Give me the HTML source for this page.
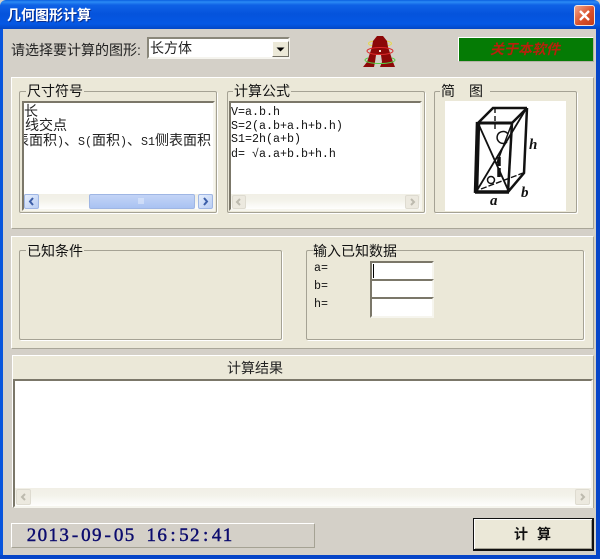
<!DOCTYPE html>
<html><head><meta charset="utf-8"><style>
html,body{margin:0;padding:0;width:600px;height:559px;overflow:hidden;background:#d4d0c8}
*{box-sizing:border-box}
div,span{position:absolute}
body{font-family:"Liberation Sans","Noto Sans CJK SC",sans-serif;color:#111}
.t{white-space:nowrap;font-size:14px;line-height:16px}
.m{white-space:nowrap;font-family:"Liberation Mono","Noto Sans CJK SC",monospace;font-size:11.67px;line-height:14px;color:#111}
b.l{font-weight:400;font-family:"Liberation Mono",monospace;font-size:11.67px}
.panel{background:#ebe8d8;border:1px solid;border-color:#fff #a9a698 #a9a698 #fff}
.grp{border:1px solid #a5a294;box-shadow:1px 1px 0 #fff;border-radius:2px}
.lab{background:#ebe8d8;padding:0 1px}
.box{background:#fff;border:2px solid;border-color:#7b7769 #f6f5ee #f6f5ee #7b7769;overflow:hidden}
.track{background:linear-gradient(#f1efe6,#f3f2ea 40%,#fefefd)}
.btnd{background:#ece9df;border:1px solid #dedbd0;border-radius:2px;color:#bdbaae}
.btnb{background:linear-gradient(135deg,#e6eefc,#b9cdf3);border:1px solid #9fb6e4;border-radius:2px}
.inp{background:#fff;border:2px solid;border-color:#7b7769 #f6f5ee #f6f5ee #7b7769;left:370px;width:64px}
.d{white-space:nowrap;font-family:"Liberation Serif",serif;font-size:19px;line-height:20px;color:#0c0c6e;-webkit-text-stroke:.45px #0c0c6e}
.d i{display:inline-block;width:10.9px;text-align:center;font-style:normal}
</style></head><body>
<!-- title bar -->
<div style="left:0;top:0;width:600px;height:29px;background:linear-gradient(#0a5fe0 0,#2b8bf5 2px,#0f62e6 5px,#0553dc 14px,#0558e4 24px,#0347c6 29px);border-radius:6px 6px 0 0"></div>
<div class="t" style="left:7px;top:7px;font-weight:700;color:#fff;font-size:14px;letter-spacing:0;text-shadow:1px 1px 0 #0a2f8f">几何图形计算</div>
<div style="left:574px;top:5px;width:21px;height:21px;background:linear-gradient(135deg,#f0a58c,#d9512c 55%,#c23c18);border:1px solid #f4e4dc;border-radius:3px"></div>
<svg style="position:absolute;left:574px;top:5px" width="21" height="21"><path d="M6 6L15 15M15 6L6 15" stroke="#fff" stroke-width="2.400"/></svg>
<!-- window borders -->
<div style="left:0;top:29px;width:3px;height:530px;background:#0855dd"></div>
<div style="left:596px;top:29px;width:4px;height:530px;background:#0645c8"></div>
<div style="left:0;top:555px;width:600px;height:4px;background:#0645c8"></div>

<!-- top row -->
<div class="t" style="left:11px;top:42px;color:#222">请选择要计算的图形:</div>
<div style="left:147px;top:37px;width:143px;height:22px;background:#fff;border:2px solid;border-color:#8a877a #f5f4ee #f5f4ee #8a877a"></div>
<div class="t" style="left:150px;top:40px;color:#222">长方体</div>
<div style="left:272px;top:41px;width:17px;height:16px;background:#ece9d8;border:1px solid;border-color:#fff #716f64 #716f64 #fff"></div>
<svg style="position:absolute;left:272px;top:41px" width="17" height="16"><path d="M4.500 6.500H12.500L8.500 10.500Z" fill="#000"/></svg>
<svg style="position:absolute;left:360px;top:33px" width="40" height="38">
<ellipse cx="20" cy="10.500" rx="11.500" ry="3" fill="none" stroke="#e8d84a" stroke-width="1"/>
<path d="M17 3H23L27 8L28 14L33 29L35 34H20L22 29L21 22H16L15 29L14 34H3L7 29L12 14L13 8Z" fill="#8c0808"/>
<ellipse cx="20" cy="18" rx="13" ry="3.500" fill="none" stroke="#dd2a2a" stroke-width="1"/>
<path d="M5 27A15 3.500 0 0 0 35 27M5 27A15 3.500 0 0 1 8 25M35 27A15 3.500 0 0 0 32 25" fill="none" stroke="#55cc44" stroke-width="1"/>
<rect x="19" y="17" width="2" height="2" fill="#f0e0d0"/>
</svg>
<div style="left:458px;top:37px;width:136px;height:25px;background:#057b05;border:1px solid;border-color:#fff #b5b2a6 #b5b2a6 #fff"></div>
<div class="t" style="left:490px;top:41px;color:#b8200c;font-weight:700;font-style:italic;font-size:14px">关于本软件</div>

<!-- panel 1 -->
<div class="panel" style="left:11px;top:77px;width:583px;height:152px"></div>
<div class="grp" style="left:19px;top:91px;width:198px;height:122px"></div>
<div class="grp" style="left:227px;top:91px;width:198px;height:122px"></div>
<div class="grp" style="left:434px;top:91px;width:143px;height:122px"></div>
<div class="t lab" style="left:26px;top:83px">尺寸符号</div>
<div class="t lab" style="left:233px;top:83px">计算公式</div>
<div class="t lab" style="left:440px;top:83px;letter-spacing:14px;padding-right:0;width:50px">简图</div>

<div class="box" style="left:22px;top:101px;width:193px;height:110px">
<div class="t" style="left:0;top:1px;line-height:14px;color:#222">长</div>
<div class="t" style="left:1px;top:15px;line-height:14px;color:#222">线交点</div>
<div class="t" style="left:-9px;top:30px;line-height:14px;color:#222">表面积<b class="l">)</b>、<b class="l">S(</b>面积<b class="l">)</b>、<b class="l">S1</b>侧表面积</div>
</div>
<div class="track" style="left:24px;top:194px;width:189px;height:15px"></div>
<div class="btnb" style="left:24px;top:194px;width:15px;height:15px"></div>
<div class="btnb" style="left:89px;top:194px;width:106px;height:15px;background:linear-gradient(#c3d4f6,#a9c2f2)"></div>
<div class="btnb" style="left:198px;top:194px;width:15px;height:15px"></div>
<svg style="position:absolute;left:24px;top:194px" width="189" height="15"><path d="M9 4L6 7.500L9 11M180 4L183 7.500L180 11" fill="none" stroke="#3d5fa8" stroke-width="2"/><path d="M114 5h6M114 7h6M114 9h6" stroke="#e6eefc"/></svg>

<div class="box" style="left:229px;top:101px;width:193px;height:110px"></div>
<div class="m" style="left:231px;top:105px">V=a.b.h</div>
<div class="m" style="left:231px;top:119px">S=2(a.b+a.h+b.h)</div>
<div class="m" style="left:231px;top:132px">S1=2h(a+b)</div>
<div class="m" style="left:231px;top:147px">d=&nbsp;√a.a+b.b+h.h</div>
<div class="track" style="left:231px;top:194px;width:189px;height:15px"></div>
<div class="btnd" style="left:232px;top:195px;width:14px;height:14px"></div>
<div class="btnd" style="left:405px;top:195px;width:14px;height:14px"></div>
<svg style="position:absolute;left:232px;top:195px" width="187" height="14"><path d="M8 4L5 7L8 10M179 4L182 7L179 10" fill="none" stroke="#bdbaae" stroke-width="2"/></svg>

<div style="left:445px;top:101px;width:121px;height:110px;background:#fff"></div>
<svg style="position:absolute;left:445px;top:101px" width="121" height="110" fill="none" stroke="#111">
<path d="M33 22L48 7H82" stroke-width="2.500"/>
<path d="M33 22H67" stroke-width="3"/>
<path d="M33 21L31 92" stroke-width="4.500"/>
<path d="M30 91H64" stroke-width="3.500"/>
<path d="M67 22L63 91" stroke-width="2.500"/>
<path d="M82 7L79 72L63 91M67 22L82 7" stroke-width="2.500"/>
<path d="M33 22L64 91M81 8L31 91" stroke-width="1.800"/>
<path d="M36 88L78 72" stroke-width="1.400" stroke-dasharray="6 2"/>
<path d="M50 7V30" stroke-width="1.400" stroke-dasharray="5 3"/>
<path d="M54 56V78" stroke-width="3.500" stroke-dasharray="9 2"/>
<path d="M52 62L67 22" stroke-width="1.400"/>
<path d="M62 41A6 6 0 1 1 63 33" stroke-width="1.500"/>
<circle cx="46" cy="79" r="3.500" stroke-width="1.500"/>
<text x="45" y="104" font-family="Liberation Serif,serif" font-style="italic" font-weight="700" font-size="15" fill="#111" stroke="none">a</text>
<text x="76" y="96" font-family="Liberation Serif,serif" font-style="italic" font-weight="700" font-size="15" fill="#111" stroke="none">b</text>
<text x="84" y="48" font-family="Liberation Serif,serif" font-style="italic" font-weight="700" font-size="15" fill="#111" stroke="none">h</text>
</svg>

<!-- panel 2 -->
<div class="panel" style="left:11px;top:236px;width:583px;height:113px"></div>
<div class="grp" style="left:19px;top:250px;width:263px;height:90px"></div>
<div class="grp" style="left:306px;top:250px;width:278px;height:90px"></div>
<div class="t lab" style="left:26px;top:243px">已知条件</div>
<div class="t lab" style="left:313px;top:243px;padding:0">输入已知数据</div>
<div class="m" style="left:314px;top:261px">a=</div>
<div class="m" style="left:314px;top:279px">b=</div>
<div class="m" style="left:314px;top:297px">h=</div>
<div class="inp" style="top:261px;height:20px"></div>
<div class="inp" style="top:279px;height:20px"></div>
<div class="inp" style="top:297px;height:21px"></div>
<div style="left:373px;top:264px;width:1px;height:14px;background:#000"></div>

<!-- panel 3 -->
<div class="panel" style="left:12px;top:355px;width:582px;height:153px"></div>
<div class="t" style="left:227px;top:360px;color:#222">计算结果</div>
<div class="box" style="left:13px;top:379px;width:580px;height:129px"></div>
<div class="track" style="left:15px;top:488px;width:576px;height:18px"></div>
<div class="btnd" style="left:16px;top:489px;width:15px;height:16px"></div>
<div class="btnd" style="left:575px;top:489px;width:15px;height:16px"></div>
<svg style="position:absolute;left:16px;top:489px" width="574" height="16"><path d="M9 5L6 8L9 11M565 5L568 8L565 11" fill="none" stroke="#bdbaae" stroke-width="2"/></svg>

<!-- status -->
<div style="left:11px;top:523px;width:304px;height:25px;background:#d4d0c8;border:1px solid;border-color:#fff #a5a294 #a5a294 #fff"></div>
<div class="d" style="left:26px;top:526px"><i>2</i><i>0</i><i>1</i><i>3</i><i>-</i><i>0</i><i>9</i><i>-</i><i>0</i><i>5</i><i>&nbsp;</i><i>1</i><i>6</i><i>:</i><i>5</i><i>2</i><i>:</i><i>4</i><i>1</i></div>
<div style="left:473px;top:518px;width:121px;height:33px;background:#ebe8d8;border:1px solid #111;border-right-width:2px;border-bottom-width:2px;box-shadow:inset 1px 1px 0 #fff,inset -1px -1px 0 #a5a294"></div>
<div class="t" style="left:514px;top:526px;font-weight:700;letter-spacing:9px;color:#111">计算</div>
</body></html>
